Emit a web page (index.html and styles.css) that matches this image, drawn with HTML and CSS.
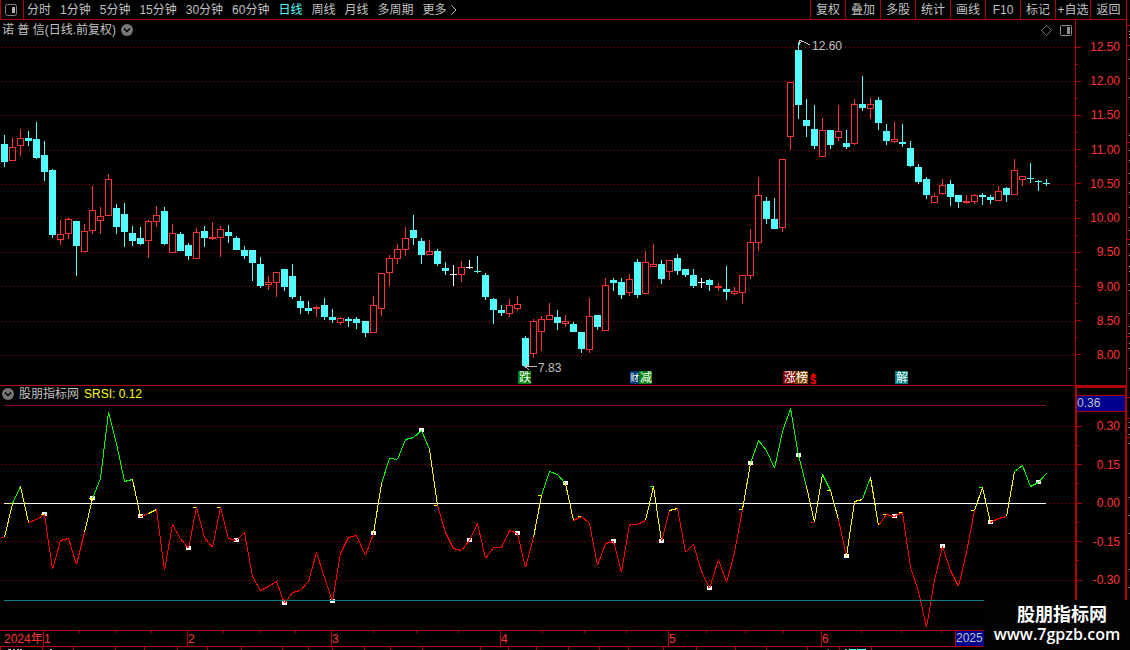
FILE: index.html
```html
<!DOCTYPE html>
<html lang="zh-CN">
<head>
    <meta charset="UTF-8">
    <meta name="viewport" content="width=device-width, initial-scale=1.0">
    <title>诺普信 日线</title>
    <link rel="stylesheet" href="styles.css">
</head>
<body>
    <div class="screen">
        <div class="main">
            <nav class="toolbar">
                <button type="button" class="layout-btn" aria-label="布局">
                    <svg width="12" height="12" viewBox="0 0 12 12"><rect x="0.5" y="0.5" width="11" height="11" rx="2" fill="none" stroke="#808080"/><rect x="7" y="3" width="3" height="6" fill="#b0b0b0"/></svg>
                </button>
                <div class="periods">
                    <button type="button">分时</button>
                    <button type="button">1分钟</button>
                    <button type="button">5分钟</button>
                    <button type="button">15分钟</button>
                    <button type="button">30分钟</button>
                    <button type="button">60分钟</button>
                    <button type="button" class="active">日线</button>
                    <button type="button">周线</button>
                    <button type="button">月线</button>
                    <button type="button">多周期</button>
                    <button type="button" class="more">更多
                        <svg width="6" height="10" viewBox="0 0 6 10"><path d="M0.5 0.5L5 5L0.5 9.5" fill="none" stroke="#c0c0c0"/></svg>
                    </button>
                </div>
                <div class="tools">
                    <button type="button">复权</button>
                    <button type="button">叠加</button>
                    <button type="button">多股</button>
                    <button type="button">统计</button>
                    <button type="button">画线</button>
                    <button type="button">F10</button>
                    <button type="button">标记</button>
                    <button type="button">+自选</button>
                    <button type="button">返回</button>
                </div>
            </nav>

            <section class="panel price">
                <div class="plot">
                    <header class="title">
                        <span>诺 普 信(日线.前复权)</span>
                        <svg width="12" height="12" viewBox="0 0 12 12"><circle cx="6" cy="6" r="6" fill="#777"/><path d="M3 4.5L6 7.5L9 4.5" fill="none" stroke="#000" stroke-width="1.5"/></svg>
                        <svg class="diamond" width="11" height="11" viewBox="0 0 11 11"><path d="M5.5 0.5L10.5 5.5L5.5 10.5L0.5 5.5Z" fill="none" stroke="#777"/></svg>
                        <svg width="12" height="11" viewBox="0 0 12 11"><rect x="0.5" y="0.5" width="11" height="10" rx="1" fill="none" stroke="#909090"/><rect x="7" y="2" width="3" height="7" fill="#909090"/></svg>
                    </header>
                    <svg id="candles" class="chart" viewBox="0 40 1075 345"></svg>
                </div>
                <ul class="axis">
                    <li>12.50</li><li class="minor"></li>
                    <li>12.00</li><li class="minor"></li>
                    <li>11.50</li><li class="minor"></li>
                    <li>11.00</li><li class="minor"></li>
                    <li>10.50</li><li class="minor"></li>
                    <li>10.00</li><li class="minor"></li>
                    <li>9.50</li><li class="minor"></li>
                    <li>9.00</li><li class="minor"></li>
                    <li>8.50</li><li class="minor"></li>
                    <li>8.00</li>
                </ul>
            </section>

            <section class="panel indicator">
                <div class="plot">
                    <header class="title">
                        <svg width="12" height="12" viewBox="0 0 12 12"><circle cx="6" cy="6" r="6" fill="#777"/><path d="M3 4.5L6 7.5L9 4.5" fill="none" stroke="#000" stroke-width="1.5"/></svg>
                        <span>股朋指标网</span>
                        <span class="value">SRSI: 0.12</span>
                    </header>
                    <svg id="srsi" class="chart" viewBox="0 402 1075 228"></svg>
                </div>
                <div class="axis-box">
                    <div class="current">0.36</div>
                    <ul class="axis">
                        <li>0.30</li><li class="minor"></li>
                        <li>0.15</li><li class="minor"></li>
                        <li>0.00</li><li class="minor"></li>
                        <li>-0.15</li><li class="minor"></li>
                        <li>-0.30</li>
                    </ul>
                </div>
            </section>

            <svg id="timeline" class="chart" viewBox="0 630 1126 20"></svg>
        </div>
        <svg id="strip" class="strip" width="3" height="650" viewBox="1127 0 3 650"></svg>
    </div>
    <div class="watermark">
        <strong>股朋指标网</strong>
        <span>www.7gpzb.com</span>
    </div>
    <script src="chart.js"></script>
</body>
</html>
```
FILE: styles.css
```css
* {
    box-sizing: border-box;
}
body {
    margin: 0;
    background: #000;
    color: #c0c0c0;
    font-family: "Liberation Sans", "Noto Sans CJK SC", sans-serif;
    font-size: 12px;
    line-height: 14px;
}
button {
    padding: 0;
    border: 0;
    background: none;
    color: inherit;
    font: inherit;
    white-space: nowrap;
    cursor: pointer;
}
svg {
    display: block;
    flex-shrink: 0;
}
.screen {
    display: flex;
    overflow: hidden;
}
.main {
    flex: 1;
    min-width: 0;
}
.strip {
    box-sizing: content-box;
    border-left: 1px solid #b00000;
}

/* toolbar */
.toolbar {
    display: flex;
    height: 20px;
    border-bottom: 1px solid #b00000;
}
.layout-btn {
    display: flex;
    align-items: center;
    width: 24px;
    padding-left: 4px;
    border-left: 1px solid #b00000;
    border-right: 1px solid #b00000;
}
.periods {
    display: flex;
    gap: 9px;
    margin-left: 3px;
}
.periods .active {
    color: #54ffff;
}
.more {
    display: flex;
    align-items: center;
    gap: 4px;
}
.tools {
    display: flex;
    margin-left: auto;
}
.tools button {
    width: 35px;
    border-left: 1px solid #b00000;
}
.tools button:last-child {
    width: 36px;
}

/* chart panels */
.panel {
    display: flex;
}
.plot {
    flex: 1;
    min-width: 0;
}
.title {
    display: flex;
    align-items: center;
    gap: 5px;
    height: 20px;
    padding: 0 3px 0 2px;
}
.title .diamond {
    margin-left: auto;
    margin-right: 3px;
}
.price {
    border-bottom: 1px solid #b00000;
}
.indicator .title {
    height: 16px;
}
.title .value {
    color: #ffff00;
}
.chart {
    width: 100%;
    height: auto;
    shape-rendering: crispEdges;
}
.axis {
    display: flex;
    flex-direction: column;
    justify-content: space-between;
    margin: 0;
    list-style: none;
    color: #ff3232;
}
.price .axis {
    width: 51px;
    padding: 20px 6px 23px 0;
    border-left: 1px solid #b00000;
}
.axis li {
    display: flex;
    align-items: center;
    height: 14px;
}
.axis li::before {
    content: "";
    width: 5px;
    height: 1px;
    margin-right: auto;
    background: #b00000;
}
.axis .minor::before {
    width: 2px;
}
.axis-box {
    display: flex;
    flex-direction: column;
    width: 51px;
    border: 2px solid #b00000;
    border-right-width: 1px;
    border-bottom: 0;
}
.current {
    height: 17px;
    margin-top: 7px;
    border-top: 1px solid #b00000;
    border-bottom: 1px solid #b00000;
    background: #000090;
}
.axis-box .axis {
    flex: 1;
    padding: 7px 5px 43px 0;
}

/* chart parts */
.grid {
    stroke: #b00000;
    stroke-dasharray: 1 3;
}
.frame {
    stroke: #b00000;
}
.up {
    stroke: #ff3232;
    fill: none;
}
.down {
    stroke: #54ffff;
    fill: #54ffff;
}
.flat {
    stroke: #fff;
    fill: #fff;
}
.note {
    fill: #c0c0c0;
}
.arrow {
    stroke: #c0c0c0;
    fill: none;
}
.badge {
    fill: #fff;
}
.badge.narrow {
    font-size: 9px;
}
.dollar {
    fill: #ff0000;
    font-size: 11px;
    font-weight: bold;
}
.month {
    fill: #ff3232;
}

.watermark {
    position: absolute;
    top: 600px;
    right: 0;
    display: flex;
    flex-direction: column;
    align-items: center;
    width: 146px;
    height: 50px;
    padding-top: 5px;
    background: #030303;
    color: #fff;
}
.watermark strong {
    padding-left: 10px;
    font-size: 18px;
    line-height: 20px;
}
.watermark span {
    font-family: "Open Sans", sans-serif;
    font-size: 16px;
    font-weight: 600;
    line-height: 18px;
}
```
FILE: chart.js
```javascript
// kind, high, body top, body bottom, low
const candles = `
d 135 144 162 167|u 138 147 161 161|u 129 138 146 156|d 131 138 141 146|d 122 139 158 159
d 141 155 172 181|d 169 170 235 238|u 220 234 240 245|u 218 219 234 239|d 221 221 246 276
u 224 231 252 252|u 186 210 231 234|u 207 216 221 234|u 174 179 216 216|d 204 208 227 234
d 203 214 232 247|d 226 233 241 246|d 227 238 244 245|u 220 221 241 258|u 206 215 222 227
d 207 211 244 245|u 224 233 253 253|d 232 234 251 251|d 243 245 256 260|u 228 232 259 259
d 226 231 238 247|u 222 237 239 240|u 226 229 238 257|d 225 232 236 243|d 236 238 250 250
d 246 250 256 259|d 250 250 263 281|d 257 264 286 288|u 276 282 285 290|u 272 272 283 297
d 269 269 287 291|d 264 276 297 299|d 296 301 308 314|d 301 308 311 314|u 306 307 309 317
d 298 305 317 320|d 309 317 320 323|u 317 318 323 325|d 317 319 321 327|d 317 319 323 329
d 321 321 333 337|u 296 305 333 333|u 273 273 309 316|u 255 258 273 286|u 244 249 259 264
u 227 238 250 256|d 215 230 238 245|d 238 241 255 264|u 240 251 255 255|d 249 251 264 266
d 262 268 271 275|w 265 274 275 286|u 261 267 275 282|w 260 267 268 269|d 256 271 272 273
d 273 275 297 300|d 298 299 310 324|d 305 310 313 316|u 299 305 314 317|u 296 304 309 311
d 336 338 366 366|u 319 321 354 358|u 316 319 332 351|u 303 315 320 320|d 310 317 323 330
u 315 321 324 327|d 322 324 332 332|d 332 332 349 353|u 298 316 350 353|d 315 315 327 330
u 278 285 331 331|d 278 280 283 291|d 278 282 295 299|u 274 279 293 296|d 259 262 295 298
u 251 262 294 294|u 244 264 267 267|d 260 264 279 284|u 260 260 272 280|d 254 258 271 275
d 269 269 275 277|d 269 275 286 288|w 278 282 283 288|d 279 280 285 291|u 283 286 288 291
d 266 289 292 300|u 287 291 294 295|u 275 275 293 304|u 229 242 276 279|u 177 195 243 251
d 197 201 219 224|d 198 219 229 229|u 159 159 228 232|u 82 82 137 150|d 42 50 105 119
d 99 120 126 137|d 105 129 146 149|u 118 130 157 157|d 130 130 145 149|u 105 131 138 141
d 130 143 147 149|u 99 104 144 145|d 76 104 108 111|u 98 104 109 119|d 97 100 123 130
d 124 131 141 145|u 122 139 142 143|d 124 142 144 147|d 141 148 166 167|d 164 167 182 184
d 177 179 195 199|u 193 196 203 203|u 179 185 194 195|d 180 184 197 206|d 195 195 202 208
u 195 201 203 204|u 194 195 202 204|d 193 195 197 205|d 195 197 200 204|u 186 191 201 201
d 187 188 195 202|u 159 170 195 195|u 176 176 180 186|d 163 178 179 183|d 180 181 182 191
d 179 183 184 186`.trim().split(/[|\n]/).map(row => row.split(' '));

// y of each point, prefixed by the colour of the segment that ends there
const srsi = `
r537 y503 g486 y522 r519 r514 r569 r540 r538 r564 r532 y498 g478 g412 g443 g481 g479 y516 r513 y509
r570 r524 r538 r548 r507 r537 r547 r507 r538 r540 r532 r576 r590 r586 r581 r603 r592 r590 r581 r552
r577 r601 r553 r537 r535 r555 r533 y483 g458 g459 g439 g437 g430 g449 y505 r532 r548 r550 r540 r523
r558 r547 r547 r530 r533 r567 r537 y495 g471 g474 g483 y520 r516 r523 r565 r543 r541 r572 r524 r524
r520 y486 y541 r510 y508 r552 r544 r571 r588 r559 r582 r552 r509 y463 g440 g450 g468 g431 g408 g455
g486 y522 y474 g490 y519 r556 y501 y499 g477 y525 r514 r516 r512 r567 r591 r627 r580 r546 r570 r586
r552 r510 y487 y522 r518 r516 y471 g465 g486 g482 g473`.trim().split(/\s+/);

const markers = [5, 11, 17, 23, 29, 35, 41, 46, 52, 58, 64, 70, 76, 82, 88, 93, 99, 105, 111, 117, 123, 129];
const ticks = 'r0 y1 y5 y11 y24 y27 y54 y67 y72 g81 y92 r101 y103 y110 y112 y121 g122'.split(' ');
const colors = { r: '#ff0000', y: '#ffff00', g: '#00ff00' };

function barX(i) {
    return 4 + 8 * i + Math.floor(i / 44.5);
}
function line(x1, y1, x2, y2, attrs) {
    return `<line x1="${x1}" y1="${y1}" x2="${x2}" y2="${y2}" ${attrs}/>`;
}
function rect(x, y, w, h, attrs) {
    return `<rect x="${x}" y="${y}" width="${w}" height="${h}" ${attrs}/>`;
}
function text(x, y, cls, value) {
    return `<text x="${x}" y="${y}" class="${cls}">${value}</text>`;
}
function gridRows(rows) {
    return rows.map(y => line(1, y + 0.5, 1075, y + 0.5, 'class="grid"')).join('');
}

function drawCandles() {
    let out = gridRows([47, 81, 115, 150, 184, 218, 252, 286, 321, 355]);
    candles.forEach(([kind, ...values], i) => {
        const [high, top, bottom, low] = values.map(Number);
        const x = barX(i);
        const cls = `class="${{ u: 'up', d: 'down', w: 'flat' }[kind]}"`;
        if (high < top) out += line(x + 0.5, high, x + 0.5, top, cls);
        if (low > bottom) out += line(x + 0.5, bottom, x + 0.5, low, cls);
        if (bottom - top === 1) {
            out += line(x - 3, top + 0.5, x + 4, top + 0.5, cls);
            out += line(x + 0.5, top, x + 0.5, bottom, cls);
        } else {
            out += rect(x - 2.5, top + 0.5, 6, bottom - top - 1, cls);
        }
    });
    out += '<path class="arrow" d="M799.5 45V40.5H802M799 42.5L803 41.5L810 45"/>';
    out += text(812, 50, 'note', '12.60');
    out += '<path class="arrow" d="M525 366.5H537M529 364L525 366.5L529 370"/>';
    out += text(538, 372, 'note', '7.83');
    [[518, '#008000', '跌'], [630, '#003a78', '财'], [639, '#008000', '减'],
     [783, '#800000', '涨'], [795, '#804000', '榜'], [895, '#008080', '解']].forEach(([x, color, label]) => {
        const narrow = label === '财';
        out += rect(x, 371, 13, 13, `fill="${color}"`);
        out += text(narrow ? x : x + 1, narrow ? 381 : 382, narrow ? 'badge narrow' : 'badge', label);
    });
    out += '<path d="M810 376L813 373L816 376Z" fill="#ff0000"/>' + text(810, 384, 'dollar', '$');
    document.getElementById('candles').innerHTML = out;
}

function drawSrsi() {
    let out = gridRows([426, 464, 503, 541, 580]);
    out += line(4, 405.5, 1046, 405.5, 'stroke="#800040"');
    out += line(4, 503.5, 1046, 503.5, 'stroke="#fff"');
    const ys = srsi.map(p => Number(p.slice(1)));
    markers.forEach(i => { out += rect(barX(i) - 2, ys[i] - 2, 5, 4, 'fill="#fff"'); });
    for (let i = 1; i < ys.length; i++) {
        out += line(barX(i - 1) + 0.5, ys[i - 1] + 0.5, barX(i) + 0.5, ys[i] + 0.5, `stroke="${colors[srsi[i][0]]}"`);
    }
    ticks.forEach(t => {
        const i = Number(t.slice(1));
        out += rect(barX(i) - 3, ys[i], 3, 1, `fill="${colors[t[0]]}"`);
    });
    out += line(4, 600.5, 1046, 600.5, 'stroke="#008080"');
    document.getElementById('srsi').innerHTML = out;
}

function drawTimeline() {
    let out = line(0, 630.5, 1126, 630.5, 'class="frame"') + line(0, 646.5, 1126, 646.5, 'class="frame"');
    [79, 115, 151, 223, 259, 295, 373, 416, 458, 542, 584, 626, 706, 745, 783, 861, 901, 941].forEach(x => {
        out += line(x + 0.5, 631, x + 0.5, 633, 'class="frame"');
    });
    [43, 187, 331, 500, 668, 821, 955].forEach((x, n) => {
        out += line(x + 0.5, 631, x + 0.5, 646, 'class="frame"');
        if (n < 6) out += text(x + 1, 643, 'month', n + 1);
    });
    out += text(4, 643, 'month', '2024年');
    out += rect(956, 631, 40, 15, 'fill="#000090"') + text(956, 642, 'note', '2025');
    [0, 42, 73, 115, 144, 177, 207, 241, 282, 308, 332, 364, 390, 422, 480, 508, 536, 568, 599, 628, 663, 696, 735, 766, 807, 839, 871].forEach(x => {
        out += line(x + 0.5, 647, x + 0.5, 650, 'class="frame"');
    });
    // tops of the next row of tabs
    out += '<path stroke="#c0c0c0" d="M8 649.5H11M13 649.5H15M17 649.5H19M20 649.5H22M50 649.5H52M828 649.5H829M845 649.5H847"/>';
    out += '<path stroke="#54ffff" d="M849 649.5H856M857 649.5H866"/>';
    document.getElementById('timeline').innerHTML = out;
}

function drawStrip() {
    let out = '';
    [25, 45, 142, 239, 336, 397, 418, 437].forEach(y => { out += rect(1127, y, 3, 1, 'fill="#b00000"'); });
    [31, 34, 37, 59, 78, 97, 135, 150, 160, 173, 183, 192, 207, 217, 230, 244, 255, 266, 271, 284, 290,
     313, 326, 333, 343, 348, 368, 422, 427, 434, 443, 497, 515, 533, 569, 587].forEach(y => {
        out += rect(1129, y, 1, 1, 'fill="#c0c0c0"');
    });
    document.getElementById('strip').innerHTML = out;
}

drawCandles();
drawSrsi();
drawTimeline();
drawStrip();
```
